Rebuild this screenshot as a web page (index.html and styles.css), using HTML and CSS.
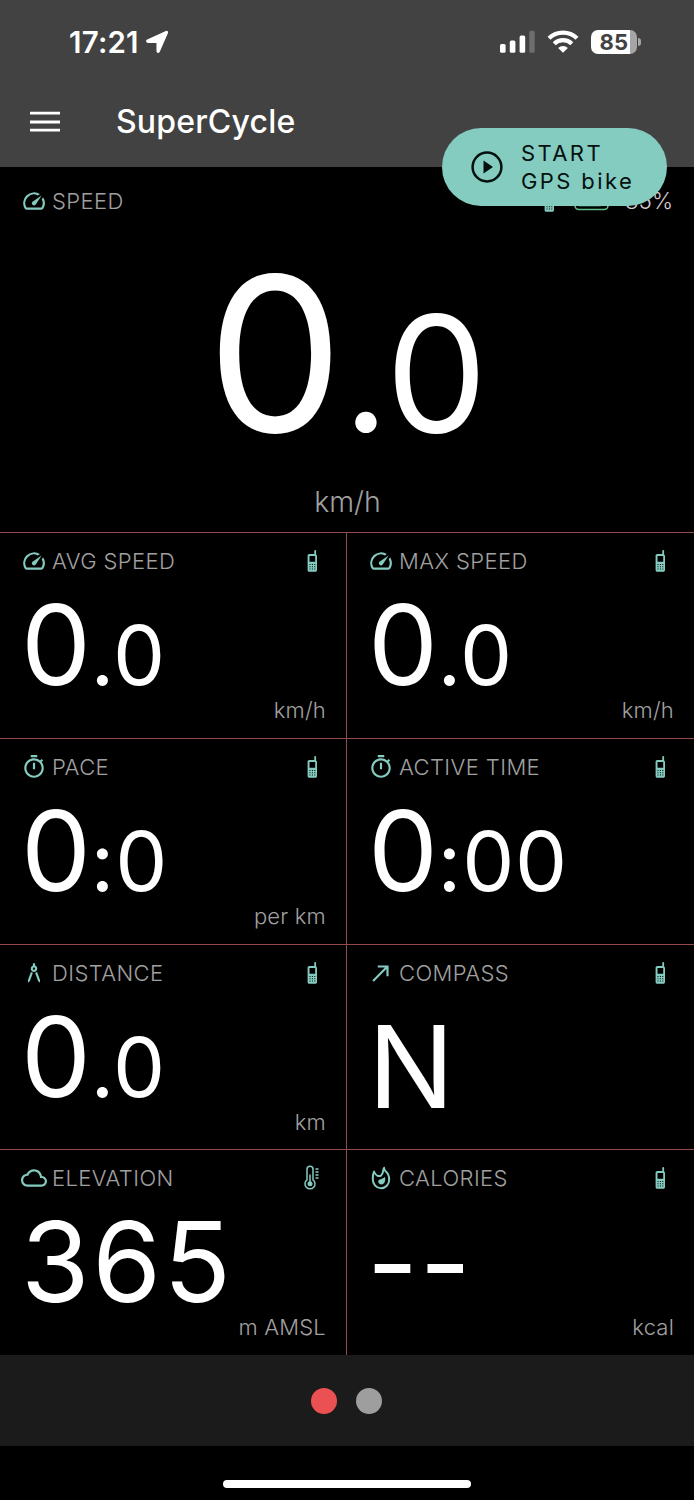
FILE: index.html
```html
<!DOCTYPE html>
<html lang="en">
<head>
    <meta charset="UTF-8">
    <meta name="viewport" content="width=device-width, initial-scale=1.0">
    <title>SuperCycle</title>
    <link rel="stylesheet" href="styles.css">
</head>
<body>
    <!-- shared icons -->
    <svg class="icon-defs" width="0" height="0">
        <symbol id="icon-speed" viewBox="0 0 24 24">
            <path d="M20.38 8.57l-1.23 1.85a8 8 0 0 1-.22 7.58H5.07A8 8 0 0 1 15.58 6.85l1.85-1.23A10 10 0 0 0 3.35 19a2 2 0 0 0 1.72 1h13.85a2 2 0 0 0 1.74-1 10 10 0 0 0-.27-10.44z"/>
            <path d="M10.59 15.41a2 2 0 0 0 2.83 0l5.66-8.49-8.49 5.66a2 2 0 0 0 0 2.83z"/>
        </symbol>
        <symbol id="icon-timer" viewBox="0 0 24 24">
            <path d="M15 1H9v2h6V1zm-4 13h2V8h-2v6zm8.03-6.61l1.42-1.42c-.43-.51-.9-.99-1.41-1.41l-1.42 1.42C16.07 4.74 14.12 4 12 4c-4.97 0-9 4.03-9 9s4.02 9 9 9 9-4.03 9-9c0-2.12-.74-4.07-1.97-5.61zM12 20c-3.87 0-7-3.13-7-7s3.13-7 7-7 7 3.13 7 7-3.13 7-7 7z"/>
        </symbol>
        <symbol id="icon-distance" viewBox="0 0 24 24">
            <path d="M6.36 18.78L6.61 21l1.62-1.54 2.77-7.6c-.68-.17-1.28-.51-1.77-.98l-2.87 7.9zM14.77 10.88c-.49.47-1.1.81-1.77.98l2.77 7.6L17.39 21l.26-2.22-2.88-7.9zM15 8c0-1.3-.84-2.4-2-2.82V3h-2v2.18C9.84 5.6 9 6.7 9 8c0 1.66 1.34 3 3 3s3-1.34 3-3zm-3 1c-.55 0-1-.45-1-1s.45-1 1-1 1 .45 1 1-.45 1-1 1z"/>
        </symbol>
        <symbol id="icon-arrow" viewBox="0 0 24 24">
            <path d="M9 5v2h6.59L4 18.59 5.41 20 17 8.41V15h2V5z"/>
        </symbol>
        <symbol id="icon-cloud" viewBox="0 0 24 24">
            <path d="M19.35 10.04C18.67 6.59 15.64 4 12 4 9.11 4 6.6 5.64 5.35 8.04 2.34 8.36 0 10.91 0 14c0 3.31 2.69 6 6 6h13c2.76 0 5-2.24 5-5 0-2.64-2.05-4.78-4.65-4.96zM19 18H6c-2.21 0-4-1.79-4-4s1.79-4 4-4h.71C7.37 7.69 9.48 6 12 6c3.04 0 5.5 2.46 5.5 5.5v.5H19c1.66 0 3 1.34 3 3s-1.34 3-3 3z"/>
        </symbol>
        <symbol id="icon-flame" viewBox="0 0 26 26">
            <path d="M6 6.600C4.900 8.700 4.800 11 4.800 14.200c0 5.200 3.600 9 8.200 9s8.200-3.600 8.200-8.600c0-3.800-1.500-6.600-3.600-8.300-.9-.8-1.400-2-1.500-3.500-1.500 2-.3 6-3.200 8-2.700.9-5.600-.9-6.900-4.200z" fill="none" stroke="currentColor" stroke-width="2" stroke-linejoin="round"/>
            <path d="M17 11.700c.9 3.800-.5 7.700-3.500 7.700-1.900 0-3.300-1.200-3.300-2.900 0-2.900 4.600-1.900 6.800-4.800z"/>
        </symbol>
        <symbol id="icon-phone" viewBox="0 0 12 24">
            <path fill-rule="evenodd" d="M8.300 1.500c0-.8 1.800-.8 1.800 0v4c.6.3.9.9.9 1.500v14c0 1.100-.7 1.800-1.800 1.800H3.400c-1.100 0-1.800-.7-1.800-1.800V6.800c0-1.100.7-1.800 1.800-1.800h4.900zM3.500 7v5.700h5.700V7zM3.500 15v1h1v-1zm2.400 0v1h1v-1zm2.400 0v1h1v-1zM3.500 17.300v1h1v-1zm2.400 0v1h1v-1zm2.400 0v1h1v-1zM3.500 19.600v1h1v-1zm2.400 0v1h1v-1zm2.400 0v1h1v-1z"/>
        </symbol>
        <symbol id="icon-thermo" viewBox="0 0 16 26">
            <path d="M3 14.800V4.200a3 3 0 0 1 6 0v10.600a5 5 0 1 1-6 0z" fill="none" stroke="currentColor" stroke-width="1.500"/>
            <circle cx="6" cy="18.800" r="2.500"/>
            <path d="M6 9.500v9M11.500 4h3M11.500 7h3M11.500 10h3M11.500 13h3" fill="none" stroke="currentColor" stroke-width="1.500"/>
        </symbol>
    </svg>

    <header class="header">
        <div class="status-bar">
            <div class="clock">17:21
                <svg width="24" height="24" viewBox="0 0 24 24"><path fill="#fff" stroke="#fff" stroke-width="1.500" stroke-linejoin="round" d="M21.200 1.600c.8-.3 1.400.3 1.100 1.100l-8.200 18.800c-.5 1.100-1.900.8-1.900-.5V12.200H3c-1.300 0-1.600-1.400-.5-1.900z"/></svg>
            </div>
            <div class="status-icons">
                <svg width="35" height="24" viewBox="0 0 35 24" fill="#fff">
                    <rect x="0" y="14" width="5.600" height="8.700" rx="1.500"/>
                    <rect x="9.800" y="10.500" width="5.600" height="12.200" rx="1.500"/>
                    <rect x="19.600" y="5.500" width="5.600" height="17.200" rx="1.500"/>
                    <rect x="29.300" y="0.700" width="5.400" height="22" rx="1.500" fill="#6e6e6e"/>
                </svg>
                <svg class="wifi" width="32" height="24" viewBox="0 0 32 24">
                    <path d="M2 8.300a20.200 20.200 0 0 1 28 0M7.200 13.700a12.700 12.700 0 0 1 17.600 0" fill="none" stroke="#fff" stroke-width="4.200"/>
                    <path d="M16 22.800l-4.900-4.900a7 7 0 0 1 9.800 0z" fill="#fff"/>
                </svg>
                <div class="battery">85</div>
                <div class="battery-cap"></div>
            </div>
        </div>
        <div class="app-bar">
            <svg class="menu" width="30" height="22" viewBox="0 0 30 22"><path d="M0 2.200h30M0 11h30M0 19.200h30" stroke="#fff" stroke-width="2.800"/></svg>
            <h1 class="app-title">SuperCycle</h1>
        </div>
        <button class="start-button">
            <svg width="32" height="32" viewBox="0 0 32 32"><circle cx="16" cy="16" r="14.400" fill="none" stroke="#04100e" stroke-width="2.500"/><path d="M12.500 9.500v13l9.500-6.500z" fill="#04100e"/></svg>
            <span>START<br>GPS bike</span>
        </button>
    </header>

    <main>
        <section class="cell cell-main">
            <div class="cell-head">
                <svg class="icon"><use href="#icon-speed"/></svg>
                <span class="label">SPEED</span>
                <div class="device">
                    <svg class="icon-phone"><use href="#icon-phone"/></svg>
                    <svg width="36" height="20" viewBox="0 0 36 20"><rect x="1" y="1" width="33" height="17.500" rx="4" fill="none" stroke="#5fbf8b" stroke-width="1.600"/><rect x="3.800" y="3.800" width="24" height="12" rx="2" fill="#174d33"/></svg>
                    <span class="percent">85%</span>
                </div>
            </div>
            <div class="value">0<span class="small">.0</span></div>
            <div class="unit">km/h</div>
        </section>

        <div class="grid">
            <section class="cell">
                <div class="cell-head">
                    <svg class="icon"><use href="#icon-speed"/></svg>
                    <span class="label">AVG SPEED</span>
                    <svg class="icon-phone"><use href="#icon-phone"/></svg>
                </div>
                <div class="value">0<span class="small">.0</span></div>
                <div class="unit">km/h</div>
            </section>
            <section class="cell">
                <div class="cell-head">
                    <svg class="icon"><use href="#icon-speed"/></svg>
                    <span class="label">MAX SPEED</span>
                    <svg class="icon-phone"><use href="#icon-phone"/></svg>
                </div>
                <div class="value">0<span class="small">.0</span></div>
                <div class="unit">km/h</div>
            </section>
            <section class="cell">
                <div class="cell-head">
                    <svg class="icon"><use href="#icon-timer"/></svg>
                    <span class="label">PACE</span>
                    <svg class="icon-phone"><use href="#icon-phone"/></svg>
                </div>
                <div class="value">0<span class="small">:0</span></div>
                <div class="unit">per km</div>
            </section>
            <section class="cell">
                <div class="cell-head">
                    <svg class="icon"><use href="#icon-timer"/></svg>
                    <span class="label">ACTIVE TIME</span>
                    <svg class="icon-phone"><use href="#icon-phone"/></svg>
                </div>
                <div class="value">0<span class="small">:00</span></div>
            </section>
            <section class="cell">
                <div class="cell-head">
                    <svg class="icon"><use href="#icon-distance"/></svg>
                    <span class="label">DISTANCE</span>
                    <svg class="icon-phone"><use href="#icon-phone"/></svg>
                </div>
                <div class="value">0<span class="small">.0</span></div>
                <div class="unit">km</div>
            </section>
            <section class="cell">
                <div class="cell-head">
                    <svg class="icon"><use href="#icon-arrow"/></svg>
                    <span class="label">COMPASS</span>
                    <svg class="icon-phone"><use href="#icon-phone"/></svg>
                </div>
                <div class="value value-compass">N</div>
            </section>
            <section class="cell">
                <div class="cell-head">
                    <svg class="icon"><use href="#icon-cloud"/></svg>
                    <span class="label">ELEVATION</span>
                    <svg class="icon-thermo"><use href="#icon-thermo"/></svg>
                </div>
                <div class="value value-elevation">365</div>
                <div class="unit">m AMSL</div>
            </section>
            <section class="cell">
                <div class="cell-head">
                    <svg class="icon"><use href="#icon-flame"/></svg>
                    <span class="label">CALORIES</span>
                    <svg class="icon-phone"><use href="#icon-phone"/></svg>
                </div>
                <div class="value value-empty">--</div>
                <div class="unit">kcal</div>
            </section>
        </div>
    </main>

    <nav class="pager">
        <span class="dot active"></span>
        <span class="dot"></span>
    </nav>
    <footer class="home-area">
        <div class="home-bar"></div>
    </footer>
</body>
</html>
```

FILE: styles.css
```css
* {
    box-sizing: border-box;
}

body {
    margin: 0;
    height: 1500px;
    background: #000;
    color: #fff;
    font-family: 'Inter', 'Liberation Sans', sans-serif;
    overflow: hidden;
}

svg {
    display: block;
    flex-shrink: 0;
}

.icon-defs {
    position: absolute;
}

.header {
    position: relative;
    height: 167px;
    background: #424242;
}

.status-bar {
    display: flex;
    justify-content: space-between;
    align-items: center;
    height: 83px;
    padding: 0 53px 0 69px;
}

.clock {
    display: flex;
    align-items: center;
    gap: 6px;
    font-size: 29.5px;
    font-weight: 600;
    letter-spacing: 0.2px;
}

.status-icons {
    display: flex;
    align-items: center;
}

.wifi {
    margin: 0 12px;
}

.battery {
    width: 46px;
    height: 24px;
    border-radius: 7px;
    background: linear-gradient(90deg, #fff 39px, #a6a6a6 39px);
    color: #424242;
    font-size: 22px;
    font-weight: 700;
    line-height: 24px;
    letter-spacing: 0.3px;
    text-align: center;
}

.battery-cap {
    width: 3px;
    height: 8px;
    margin-left: 1px;
    border-radius: 0 3px 3px 0;
    background: #a6a6a6;
}

.app-bar {
    display: flex;
    align-items: center;
    height: 78px;
    padding-left: 30px;
}

.app-title {
    margin: 0 0 1px 56px;
    font-size: 32px;
    font-weight: 450;
    letter-spacing: 0.2px;
}

/* floats over the header edge and the speed cell */
.start-button {
    position: absolute;
    top: 128px;
    left: 442px;
    z-index: 10;
    display: flex;
    align-items: center;
    gap: 18px;
    width: 225px;
    height: 78px;
    padding: 0 0 1px 29px;
    border: none;
    border-radius: 39px;
    background: #84cbc0;
    color: #04100e;
    font-family: inherit;
    font-size: 22px;
    line-height: 28px;
    letter-spacing: 2.4px;
    text-align: left;
}

.cell {
    display: flex;
    flex-direction: column;
    padding: 0 20px 0 21px;
}

.cell-head {
    display: flex;
    align-items: center;
    gap: 5px;
    height: 56px;
    color: #84cbc0;
}

.icon {
    width: 26px;
    height: 26px;
    fill: currentColor;
}

.label {
    flex: 1;
    color: #a0a0a0;
    font-size: 22px;
    font-weight: 300;
    line-height: 26px;
    letter-spacing: 0.4px;
}

.icon-phone {
    width: 12px;
    height: 24px;
    margin-right: 8px;
    fill: currentColor;
}

.icon-thermo {
    width: 16px;
    height: 26px;
    margin-right: 6px;
    fill: currentColor;
}

.value {
    height: 109px;
    font-size: 111px;
    line-height: 112px;
    letter-spacing: -0.5px;
}

.small {
    font-size: 0.745em;
    line-height: 0;
    letter-spacing: 0.8px;
}

.unit {
    align-self: flex-end;
    color: #a0a0a0;
    font-size: 22px;
    font-weight: 300;
    line-height: 24px;
    letter-spacing: 0.2px;
}

.value-compass {
    margin-top: 10px;
    font-size: 114.5px;
}

.value-elevation {
    letter-spacing: 2.6px;
}

.value-empty {
    margin-left: -1px;
    line-height: 113px;
    letter-spacing: 1.8px;
}

.cell-main {
    height: 365px;
}

.cell-main .cell-head {
    height: 67px;
}

.cell-main .value {
    height: 239px;
    font-size: 216px;
    line-height: 240px;
    text-align: center;
}

.cell-main .unit {
    align-self: center;
    font-size: 28.5px;
    line-height: 58px;
    letter-spacing: 0;
}

.device {
    display: flex;
    align-items: center;
}

.device .icon-phone {
    margin-right: 19px;
}

.percent {
    width: 64px;
    padding-right: 1px;
    color: #d8c8cc;
    font-size: 22.5px;
    font-weight: 300;
    text-align: right;
}

.grid {
    display: grid;
    grid-template-columns: 347px 347px;
    grid-template-rows: repeat(4, 205.75px);
}

.grid .cell {
    border-top: 1px solid #924a4c;
}

.grid .cell:nth-child(odd) {
    border-right: 1px solid #924a4c;
}

.pager {
    display: flex;
    justify-content: center;
    align-items: center;
    gap: 19px;
    height: 91px;
    padding: 0 2px 0 0;
    background: #1b1b1b;
}

.dot {
    width: 26px;
    height: 26px;
    border-radius: 50%;
    background: #9e9e9e;
}

.dot.active {
    background: #eb5153;
}

.home-area {
    display: flex;
    justify-content: center;
    padding-top: 34px;
}

.home-bar {
    width: 248px;
    height: 8px;
    border-radius: 4px;
    background: #fff;
}
```
